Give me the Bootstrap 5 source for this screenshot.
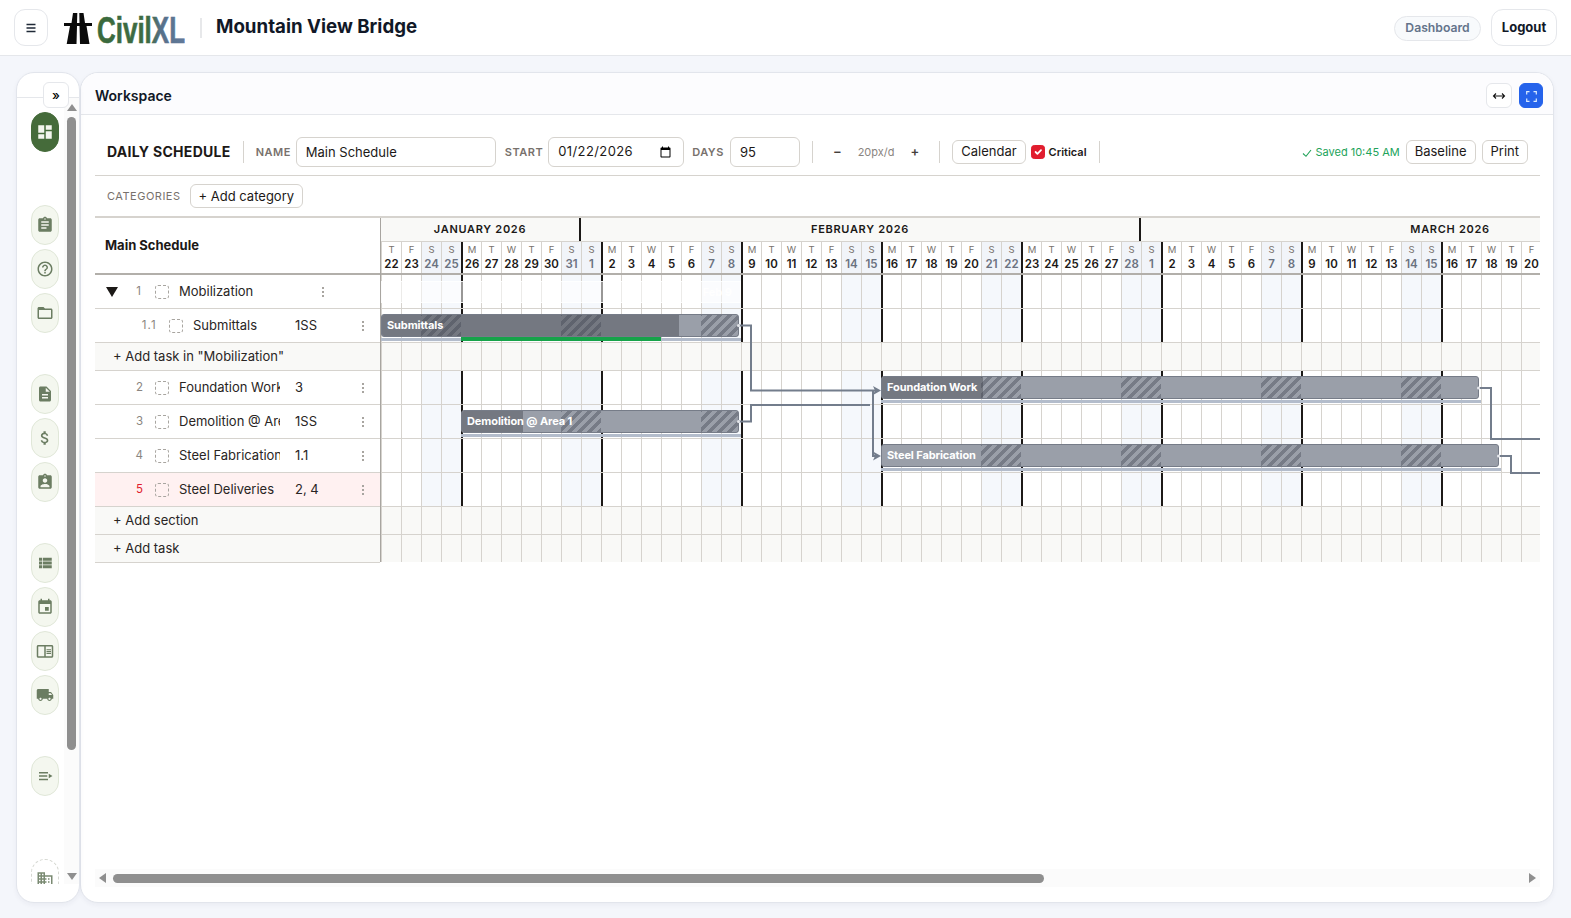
<!DOCTYPE html>
<html lang="en">
<head>
<meta charset="utf-8">
<title>Mountain View Bridge</title>
<link rel="stylesheet" href="https://cdn.jsdelivr.net/npm/bootstrap@5.3.0/dist/css/bootstrap.min.css">
<style>
html,body{height:100%;overflow:hidden}
body{font-family:Inter,"Liberation Sans",sans-serif;background:#f4f6fb;color:#1c1917;font-size:13px}
.app-top{height:56px;background:#fff;border-bottom:1px solid #e5e7eb;padding:0 14px}
.menu-btn{width:34px;height:37px;border:1px solid #e5e7eb;border-radius:11px;background:#fff;padding:0}
.logo-box{margin-left:16px;height:36px}
.top-sep{width:2px;height:20px;background:#e7e8ea;margin:0 14px 0 15px}
.proj{font-size:18.7px;font-weight:700;color:#111827;margin:0;line-height:1}
.dash-pill{height:25px;width:87px;border:1px solid #e5e7eb;border-radius:13px;background:#f8fafc;color:#64748b;font-size:12.2px;font-weight:600;padding:0;margin-right:10px;margin-top:1px}
.logout-btn{height:37px;width:66px;border:1px solid #e5e7eb;border-radius:12px;background:#fff;color:#111827;font-size:13px;font-weight:700;padding:0}
.shell{height:862px;padding:16px 17px 15px 16px}
.rail{width:64px;background:#fff;border:1px solid #e2e5ec;border-radius:18px;flex:none;box-shadow:0 2px 5px rgba(30,40,70,.05)}
.rail-top{height:25px;border-bottom:1px solid #e5e7eb}
.rail-toggle{top:9px;left:26px;width:26px;height:26px;border:1px solid #e5e7eb;border-radius:6px;background:#fff;font-size:13px;font-weight:500;padding:0;line-height:1;z-index:2}
.rail-body{height:786px}
.rail-nav{padding:14px 0 0 14px;width:48px;overflow:hidden}
.pill{width:28px;height:40px;border:1px solid #e0e7d8;border-radius:14px;background:#f4f7ef;color:#6b7d62;flex:none;margin-bottom:4px}
.pill svg{width:18px;height:18px;fill:currentColor}
.pill.on{background:#456b3a;border-color:#456b3a;color:#f3f6ee}
.pill.dash{border:1px dashed #d6d8d2;background:#fff;color:#7a8a72}
.gap-a{margin-top:49px}.gap-b{margin-top:37px}.gap-c{margin-top:59px}
.vbar{width:15px;background:#fbfbfb;margin-left:auto}
.vthumb{width:9px;height:633px;background:#8f8f8f;border-radius:5px;margin:0 auto}
.tri-u{width:0;height:0;border:5px solid transparent;border-top:0;border-bottom:7px solid #8f8f8f;margin:6px auto 6px}
.tri-d{width:0;height:0;border:5px solid transparent;border-bottom:0;border-top:7px solid #8f8f8f;margin:auto auto 4px}
.work{background:#fff;border:1px solid #e2e5ec;border-radius:18px;min-width:0;box-shadow:0 2px 5px rgba(30,40,70,.05)}
.work-head{height:42px;background:#fcfcfe;border-bottom:1px solid #e5e7eb;border-radius:18px 18px 0 0;padding:10px 10px 0 14px}
.work-title{font-size:14px;font-weight:600;color:#111827;margin:0;line-height:26px}
.mini{width:26px;height:25px;border:1px solid #e5e7eb;border-radius:6px;background:#fff;padding:0;line-height:1}
.mini.blue{width:24px;background:#2563eb;border-color:#2563eb;margin-left:7px}
.work-body{padding:22px 13px 0 14px;height:787px}
.tb-row{height:39px;padding:0 12px 9px;border-bottom:1px solid #d6d3ce}
.tb-title{font-size:14px;font-weight:700;letter-spacing:.3px;color:#1c1917;white-space:nowrap}
.tb-sep{width:1px;height:22px;background:#d6d3ce;flex:none}
.tb-lab{font-size:11px;font-weight:600;letter-spacing:.5px;color:#78716c;padding-top:1px}
.tb-in{height:30px;border:1px solid #d6d3ce;border-radius:6px;font-size:13px;color:#1c1917;padding:1px 9px 0;box-shadow:none;flex:none}
.tb-date{letter-spacing:.4px}
.tb-btn{height:24px;border:1px solid #d6d3ce;border-radius:6px;background:#fff;color:#1c1917;font-size:13px;padding:0 8px;line-height:1;flex:none}
.tb-zoom{font-size:11px;color:#8a8580;padding-top:1px}
.tb-pm{font-size:13px;font-weight:600;color:#44403c;padding-top:1px}
.crit{width:14px;height:14px;margin:1px 0 0;background-color:#fff;border-radius:2px;flex:none}
.crit:checked{background-color:#e11d2e;border-color:#e11d2e}
.crit-lab{font-size:11px;font-weight:600;color:#1c1917;padding-top:1px}
.saved{font-size:11px;color:#22a35a;white-space:nowrap;padding-top:1px}
.cat-row{height:40px;padding:8px 12px 0}
.cat-lab{font-size:11px;letter-spacing:.5px;color:#78716c}
.gantt{border-top:2px solid #d6d3ce;height:346px}
.g-left{width:286px;border-right:1px solid #a8a5a0;flex:none}
.g-left-head{height:57px;border-bottom:2px solid #b2afaa;padding-left:10px;font-size:13px;font-weight:700;color:#1c1917}
.g-row{height:34px;border-bottom:1px solid #d6d3ce;padding-left:11px;white-space:nowrap}
.g-row.hot{background:#fff1f1}
.g-row.hot .num{color:#e11d2e}
.g-add{border-bottom:1px solid #d6d3ce;background:#f9f9f7;padding-left:18px;color:#292524;font-size:13px}
.h28{height:28px}
.twist{width:12px;font-size:0;flex:none}
.twist i{display:block;width:0;height:0;border:6px solid transparent;border-bottom:0;border-top:10px solid #1c1917}
.num{width:23px;text-align:right;font-size:11.5px;color:#8a8580;flex:none;margin-right:14px}
.num.ind{width:25px;margin-left:12px;margin-right:12px}
.num.sub{width:28px;margin-left:23px;margin-right:12px;letter-spacing:1.2px}
.tick{width:14px;height:14px;border:1px dashed #a8a5a0;border-radius:3px;flex:none;margin-right:10px}
.tname{width:101px;overflow:hidden;color:#292524;flex:none;font-size:13px}
.tname.sub{width:102px}
.pred{width:48px;margin-left:15px;flex:none;font-size:13px;color:#292524}
.pred.sub{margin-left:0}
.kebab{width:2px;height:10px;margin-left:19px;flex:none;background:radial-gradient(circle at 1px 1px,#a8a5a0 1px,transparent 1.2px) 0 0/2px 4px}
.kebab.top{margin-left:42px}
.g-right{min-width:0;overflow:hidden}
.tl-inner{width:1900px}
.tl-month{height:24px;border-bottom:1px solid #d6d3ce;background:#f9f9f7}
.mon{flex:none;font-size:11px;font-weight:600;letter-spacing:.7px;color:#1c1917;text-align:center;line-height:23px;border-left:2px solid #1c1917}
.mon.first{border-left:0}
.tl-days{height:33px;border-bottom:2px solid #b2afaa}
.dc{flex:none;width:20px;border-left:1px solid #d6d3ce;text-align:center;padding-top:2px;line-height:1}
.dc b{display:block;font-size:9.5px;font-weight:400;color:#78716c;margin-bottom:2.5px;line-height:11px}
.dc span{display:block;font-size:11.5px;font-weight:600;color:#1c1917;line-height:13px;margin-left:-2px;margin-right:-2px}
.dc.we{background:#f1f4f9}
.dc.we span{color:#6b7280}
.dc.mo{border-left:2px solid #1c1917}
.tl-body{width:1900px}
.tl-row{height:34px;border-bottom:1px solid #d6d3ce;background-image:repeating-linear-gradient(90deg,transparent 0 80px,#1c1917 80px 82px,transparent 82px 140px),repeating-linear-gradient(90deg,#d6d3ce 0 1px,transparent 1px 20px),repeating-linear-gradient(90deg,transparent 0 40px,#f5f8fc 40px 80px,transparent 80px 140px)}
.tl-row.plain{height:28px;background-color:#f9f9f7;background-image:repeating-linear-gradient(90deg,#d6d3ce 0 1px,transparent 1px 20px)}
.tl-over{top:0;left:0;width:1900px;height:288px;z-index:3}
.bar{height:23px;background:#9a9fa9;border:1px solid #767c88;border-radius:3px;overflow:hidden}
.bar-done{top:0;bottom:0;left:0;background:#747881}
.bar-hatch{top:0;bottom:0;background:repeating-linear-gradient(-45deg,rgba(60,65,78,.38) 0 3.5px,transparent 3.5px 7px)}
.bar-lab{position:relative;color:#fff;font-size:11px;font-weight:700;line-height:21px;padding-left:5px;white-space:nowrap;letter-spacing:-.1px}
.bar-base{height:3px;background:#b3bccb}
.bar-prog{height:4px;background:#16a34a}
.sum{height:22px;background:rgba(255,255,255,.55);border:1px solid rgba(255,255,255,.8);color:#fff;font-size:11px;font-weight:700;text-align:right;padding-right:8px;line-height:20px}
.hbar{height:18px;background:#fbfbfb;margin-top:auto;margin-bottom:15px;padding:0 4px}
.tri-l{width:0;height:0;border:5px solid transparent;border-left:0;border-right:7px solid #8f8f8f;flex:none}
.tri-r{width:0;height:0;border:5px solid transparent;border-right:0;border-left:7px solid #8f8f8f;flex:none}
.hthumb{width:931px;height:9px;background:#8f8f8f;border-radius:5px;margin-left:7px;flex:none}
</style>
</head>
<body>
<header class="app-top d-flex align-items-center">
  <button class="menu-btn d-flex align-items-center justify-content-center" aria-label="Menu"><svg width="12" height="12" viewBox="0 0 12 12"><path d="M1.5 2.5h9M1.5 6h9M1.5 9.5h9" stroke="#1f2937" stroke-width="1.3"/></svg></button>
  <div class="logo-box d-flex align-items-center">
    <svg width="121" height="36" viewBox="0 0 121 36">
      <defs><linearGradient id="lg" x1="0" x2="1"><stop offset="0" stop-color="#3a6a3c"/><stop offset=".6" stop-color="#3f6b45"/><stop offset=".72" stop-color="#56708a"/><stop offset="1" stop-color="#627a9a"/></linearGradient></defs>
      <path d="M9 3h4.300L13 13H7.500zM15.300 3H19.500L21 13H15.500zM0 13h28v3H0zM6 16h7l-.5 18H2.700zM15.500 16h7l3 18H16z" fill="#0b0b0b"/>
      <text x="33" y="33" font-family="Liberation Sans" font-weight="700" font-size="36" textLength="88" lengthAdjust="spacingAndGlyphs" fill="url(#lg)" stroke="url(#lg)" stroke-width=".6">CivilXL</text>
    </svg>
  </div>
  <div class="top-sep"></div>
  <h1 class="proj">Mountain View Bridge</h1>
  <button class="dash-pill ms-auto">Dashboard</button>
  <button class="logout-btn">Logout</button>
</header>

<div class="shell d-flex">
  <aside class="rail position-relative d-flex flex-column">
    <div class="rail-top"></div>
    <button class="rail-toggle position-absolute">»</button>
    <div class="rail-body d-flex">
      <div class="rail-nav d-flex flex-column">
        <div class="pill on d-flex align-items-center justify-content-center"><svg viewBox="0 0 24 24"><path d="M3 13h8V3H3zm0 8h8v-6H3zm10 0h8V11h-8zm0-18v6h8V3z"/></svg></div>
        <div class="pill gap-a d-flex align-items-center justify-content-center"><svg viewBox="0 0 24 24"><path d="M19 3h-4.18C14.4 1.84 13.3 1 12 1c-1.3 0-2.4.84-2.82 2H5c-1.1 0-2 .9-2 2v14c0 1.1.9 2 2 2h14c1.1 0 2-.9 2-2V5c0-1.1-.9-2-2-2zm-7 0c.55 0 1 .45 1 1s-.45 1-1 1-1-.45-1-1 .45-1 1-1zm2 14H7v-2h7v2zm3-4H7v-2h10v2zm0-4H7V7h10v2z"/></svg></div>
        <div class="pill d-flex align-items-center justify-content-center"><svg viewBox="0 0 24 24"><path d="M11 18h2v-2h-2v2zm1-16C6.48 2 2 6.48 2 12s4.48 10 10 10 10-4.48 10-10S17.52 2 12 2zm0 18c-4.41 0-8-3.59-8-8s3.59-8 8-8 8 3.59 8 8-3.59 8-8 8zm0-14c-2.21 0-4 1.79-4 4h2c0-1.1.9-2 2-2s2 .9 2 2c0 2-3 1.75-3 5h2c0-2.25 3-2.5 3-5 0-2.21-1.79-4-4-4z"/></svg></div>
        <div class="pill d-flex align-items-center justify-content-center"><svg viewBox="0 0 24 24"><path d="M20 6h-8l-2-2H4c-1.1 0-1.99.9-1.99 2L2 18c0 1.1.9 2 2 2h16c1.1 0 2-.9 2-2V8c0-1.1-.9-2-2-2zm0 12H4V8h16v10z"/></svg></div>
        <div class="pill gap-b d-flex align-items-center justify-content-center"><svg viewBox="0 0 24 24"><path d="M14 2H6c-1.1 0-1.99.9-1.99 2L4 20c0 1.1.89 2 1.99 2H18c1.1 0 2-.9 2-2V8l-6-6zm2 16H8v-2h8v2zm0-4H8v-2h8v2zm-3-5V3.5L18.5 9H13z"/></svg></div>
        <div class="pill d-flex align-items-center justify-content-center"><svg viewBox="0 0 24 24"><path d="M11.8 10.9c-2.27-.59-3-1.2-3-2.15 0-1.09 1.01-1.85 2.7-1.85 1.78 0 2.44.85 2.5 2.1h2.21c-.07-1.72-1.12-3.3-3.21-3.81V3h-3v2.16c-1.94.42-3.5 1.68-3.5 3.61 0 2.31 1.91 3.46 4.7 4.13 2.5.6 3 1.48 3 2.41 0 .69-.49 1.79-2.7 1.79-2.06 0-2.87-.92-2.98-2.1h-2.2c.12 2.19 1.76 3.42 3.68 3.83V21h3v-2.15c1.95-.37 3.5-1.5 3.5-3.55 0-2.84-2.43-3.81-4.7-4.4z"/></svg></div>
        <div class="pill d-flex align-items-center justify-content-center"><svg viewBox="0 0 24 24"><path d="M19 3h-4.18C14.4 1.84 13.3 1 12 1c-1.3 0-2.4.84-2.82 2H5c-1.1 0-2 .9-2 2v14c0 1.1.9 2 2 2h14c1.1 0 2-.9 2-2V5c0-1.1-.9-2-2-2zm-7 0c.55 0 1 .45 1 1s-.45 1-1 1-1-.45-1-1 .45-1 1-1zm0 4c1.66 0 3 1.34 3 3s-1.34 3-3 3-3-1.34-3-3 1.34-3 3-3zm6 12H6v-1.4c0-2 4-3.1 6-3.1s6 1.1 6 3.1V19z"/></svg></div>
        <div class="pill gap-b d-flex align-items-center justify-content-center"><svg viewBox="0 0 24 24"><path d="M4 14h4v-4H4v4zm0 5h4v-4H4v4zM4 9h4V5H4v4zm5 5h12v-4H9v4zm0 5h12v-4H9v4zM9 5v4h12V5H9z"/></svg></div>
        <div class="pill d-flex align-items-center justify-content-center"><svg viewBox="0 0 24 24"><path d="M17 12h-5v5h5v-5zM16 1v2H8V1H6v2H5c-1.11 0-1.99.9-1.99 2L3 19c0 1.1.89 2 2 2h14c1.1 0 2-.9 2-2V5c0-1.1-.9-2-2-2h-1V1h-2zm3 18H5V8h14v11z"/></svg></div>
        <div class="pill d-flex align-items-center justify-content-center"><svg viewBox="0 0 24 24"><path d="M21 4H3c-1.1 0-2 .9-2 2v13c0 1.1.9 2 2 2h18c1.1 0 2-.9 2-2V6c0-1.1-.9-2-2-2zM3 19V6h8v13H3zm18 0h-8V6h8v13zm-7-9.5h6V11h-6zm0 2.5h6v1.5h-6zm0 2.5h6V16h-6z"/></svg></div>
        <div class="pill d-flex align-items-center justify-content-center"><svg viewBox="0 0 24 24"><path d="M20 8h-3V4H3c-1.1 0-2 .9-2 2v11h2c0 1.66 1.34 3 3 3s3-1.34 3-3h6c0 1.66 1.34 3 3 3s3-1.34 3-3h2v-5l-3-4zM6 18.5c-.83 0-1.5-.67-1.5-1.5s.67-1.5 1.5-1.5 1.5.67 1.5 1.5-.67 1.5-1.5 1.5zm13.5-9l1.96 2.5H17V9.5h2.5zm-1.5 9c-.83 0-1.5-.67-1.5-1.5s.67-1.5 1.5-1.5 1.5.67 1.5 1.5-.67 1.5-1.5 1.5z"/></svg></div>
        <div class="pill gap-b d-flex align-items-center justify-content-center"><svg viewBox="0 0 24 24"><path d="M4 6.500h12v2H4zM4 11h11v2H4zM4 15.500h12v2H4zM17 9l5 3-5 3z"/></svg></div>
        <div class="pill dash gap-c d-flex align-items-center justify-content-center"><svg viewBox="0 0 24 24"><path d="M12 7V3H2v18h20V7H12zM6 19H4v-2h2v2zm0-4H4v-2h2v2zm0-4H4V9h2v2zm0-4H4V5h2v2zm4 12H8v-2h2v2zm0-4H8v-2h2v2zm0-4H8V9h2v2zm0-4H8V5h2v2zm10 12h-8v-2h2v-2h-2v-2h2v-2h-2V9h8v10zm-2-8h-2v2h2v-2zm0 4h-2v2h2v-2z"/></svg></div>
      </div>
      <div class="vbar d-flex flex-column">
        <div class="tri-u"></div>
        <div class="vthumb"></div>
        <div class="tri-d"></div>
      </div>
    </div>
  </aside>

  <main class="work flex-grow-1 d-flex flex-column">
    <div class="work-head d-flex align-items-start">
      <h2 class="work-title">Workspace</h2>
      <button class="mini ms-auto" aria-label="Fit width"><svg width="14" height="10" viewBox="0 0 14 10"><path d="M1.500 5h11M4 2.500 1.500 5 4 7.500M10 2.500 12.500 5 10 7.500" fill="none" stroke="#111" stroke-width="1.100"/></svg></button>
      <button class="mini blue" aria-label="Fullscreen"><svg width="11" height="11" viewBox="0 0 11 11"><path d="M.7 3.500V.7h2.800M7.500.7h2.800v2.800M10.300 7.500v2.800H7.500M3.500 10.300H.7V7.500" fill="none" stroke="#dbeafe" stroke-width="1.200"/></svg></button>
    </div>
    <div class="work-body d-flex flex-column">
      <div class="tb-row d-flex align-items-center">
        <span class="tb-title">DAILY SCHEDULE</span>
        <span class="tb-sep" style="margin:0 12px"></span>
        <span class="tb-lab" style="margin-right:5px">NAME</span>
        <input class="form-control tb-in" style="width:200px" value="Main Schedule" aria-label="Name">
        <span class="tb-lab" style="margin:0 5px 0 9px">START</span>
        <input class="form-control tb-in tb-date" style="width:136px" type="date" value="2026-01-22" aria-label="Start">
        <span class="tb-lab" style="margin:0 6px 0 8px">DAYS</span>
        <input class="form-control tb-in" style="width:70px" value="95" aria-label="Days">
        <span class="tb-sep" style="margin-left:12px"></span>
        <span class="tb-pm" style="margin-left:20px">−</span>
        <span class="tb-zoom" style="margin-left:16px">20px/d</span>
        <span class="tb-pm" style="margin-left:16px">+</span>
        <span class="tb-sep" style="margin-left:20px"></span>
        <button class="tb-btn" style="margin-left:12px">Calendar</button>
        <input class="form-check-input crit" style="margin-left:5px" type="checkbox" checked aria-label="Critical">
        <span class="crit-lab ms-1">Critical</span>
        <span class="tb-sep" style="margin-left:12px"></span>
        <span class="saved ms-auto"><svg width="10" height="10" viewBox="0 0 10 10"><path d="M1 5.500 4 8.300 9 2" fill="none" stroke="#22a35a" stroke-width="1.100"/></svg> Saved 10:45 AM</span>
        <button class="tb-btn" style="margin-left:6px">Baseline</button>
        <button class="tb-btn" style="margin-left:6px">Print</button>
      </div>
      <div class="cat-row d-flex align-items-start">
        <span class="cat-lab" style="line-height:24px;margin-right:9px">CATEGORIES</span>
        <button class="tb-btn">+ Add category</button>
      </div>
      <div class="gantt d-flex">
        <div class="g-left">
          <div class="g-left-head d-flex align-items-center">Main Schedule</div>
          <div class="g-row d-flex align-items-center"><span class="twist"><i></i></span><span class="num">1</span><span class="tick"></span><span class="tname">Mobilization</span><span class="kebab top"></span></div>
          <div class="g-row d-flex align-items-center"><span class="num sub">1.1</span><span class="tick"></span><span class="tname sub">Submittals</span><span class="pred sub">1SS</span><span class="kebab"></span></div>
          <div class="g-add h28 d-flex align-items-center">+ Add task in "Mobilization"</div>
          <div class="g-row d-flex align-items-center"><span class="num ind">2</span><span class="tick"></span><span class="tname">Foundation Work</span><span class="pred">3</span><span class="kebab"></span></div>
          <div class="g-row d-flex align-items-center"><span class="num ind">3</span><span class="tick"></span><span class="tname">Demolition @ Area 1</span><span class="pred">1SS</span><span class="kebab"></span></div>
          <div class="g-row d-flex align-items-center"><span class="num ind">4</span><span class="tick"></span><span class="tname">Steel Fabrication</span><span class="pred">1.1</span><span class="kebab"></span></div>
          <div class="g-row hot d-flex align-items-center"><span class="num ind">5</span><span class="tick"></span><span class="tname">Steel Deliveries</span><span class="pred">2, 4</span><span class="kebab"></span></div>
          <div class="g-add h28 d-flex align-items-center">+ Add section</div>
          <div class="g-add h28 d-flex align-items-center">+ Add task</div>
        </div>
        <div class="g-right flex-grow-1">
          <div class="tl-inner">
            <div class="tl-month d-flex">
              <div class="mon first" style="width:198px">JANUARY 2026</div>
              <div class="mon" style="width:560px">FEBRUARY 2026</div>
              <div class="mon" style="width:620px">MARCH 2026</div>
            </div>
            <div class="tl-days d-flex" id="days"></div>
            <div class="tl-body position-relative" id="tlbody">
              <div class="tl-row"></div>
              <div class="tl-row"></div>
              <div class="tl-row plain"></div>
              <div class="tl-row"></div>
              <div class="tl-row"></div>
              <div class="tl-row"></div>
              <div class="tl-row"></div>
              <div class="tl-row plain"></div>
              <div class="tl-row plain"></div>
              <svg class="position-absolute tl-over" viewBox="381 275 1900 288">
                <g fill="none" stroke="#737d8c" stroke-width="2">
                  <path d="M739 325.500H751V390.500H876"/>
                  <path d="M739 421.500H751V405H870"/>
                  <path d="M873 390V456H876"/>
                  <path d="M1479 388H1491V439H1560"/>
                  <path d="M1499 456H1511V473H1560"/>
                </g>
                <g fill="#737d8c">
                  <path d="M873 386 881 390.500 873 395 875 390.500z"/>
                  <path d="M873 451.500 881 456 873 460.500 875 456z"/>
                </g>
                <g fill="#e5e7eb">
                  <circle cx="738.500" cy="325.500" r="1.500"/><circle cx="738.500" cy="421.500" r="1.500"/><circle cx="1478.500" cy="388" r="1.500"/><circle cx="1498.500" cy="456" r="1.500"/>
                </g>
              </svg>
            </div>
          </div>
        </div>
      </div>
      <div class="hbar d-flex align-items-center">
        <span class="tri-l"></span>
        <span class="hthumb"></span>
        <span class="tri-r ms-auto"></span>
      </div>
    </div>
  </main>
</div>

<script src="https://cdn.jsdelivr.net/npm/bootstrap@5.3.0/dist/js/bootstrap.bundle.min.js"></script>
<script>
var L='SMTWTFS',d=new Date(2026,0,22),h='';
for(var i=0;i<60;i++){
  var w=d.getDay(),c='dc'+(w==0||w==6?' we':'')+(w==1?' mo':'');
  h+='<div class="'+c+'"><b>'+L[w]+'</b><span>'+d.getDate()+'</span></div>';
  d.setDate(d.getDate()+1);
}
document.getElementById('days').innerHTML=h;
var X0=381,Y0=275,body=document.getElementById('tlbody');
function place(el,x,y,w){el.className+=' position-absolute';el.style.left=(x-X0)+'px';el.style.top=(y-Y0)+'px';el.style.width=w+'px';body.appendChild(el);return el}
function mk(c,t){var e=document.createElement('div');e.className=c;if(t)e.textContent=t;return e}
place(mk('sum','Feb 9'),381,281,360);
[{n:'Submittals',x:381,r:739,y:314,done:297,prog:[461,661]},
 {n:'Demolition @ Area 1',x:461,r:739,y:410,done:61},
 {n:'Foundation Work',x:881,r:1479,y:376,done:101},
 {n:'Steel Fabrication',x:881,r:1499,y:444,done:0}].forEach(function(b){
  place(mk('bar-base'),b.x,b.y+24,b.r-b.x+2);
  if(b.prog)place(mk('bar-prog'),b.prog[0],b.y+23,b.prog[1]-b.prog[0]).style.zIndex=1;
  var e=mk('bar');
  if(b.done){var p=mk('bar-done position-absolute');p.style.width=b.done+'px';e.appendChild(p)}
  for(var s=421;s<b.r;s+=140){
    if(s+40<=b.x)continue;
    var k=mk('bar-hatch position-absolute');k.style.left=(s-b.x-1)+'px';k.style.width='40px';e.appendChild(k);
  }
  e.appendChild(mk('bar-lab',b.n));
  place(e,b.x,b.y,b.r-b.x).style.zIndex=2;
});
</script>
</body>
</html>
